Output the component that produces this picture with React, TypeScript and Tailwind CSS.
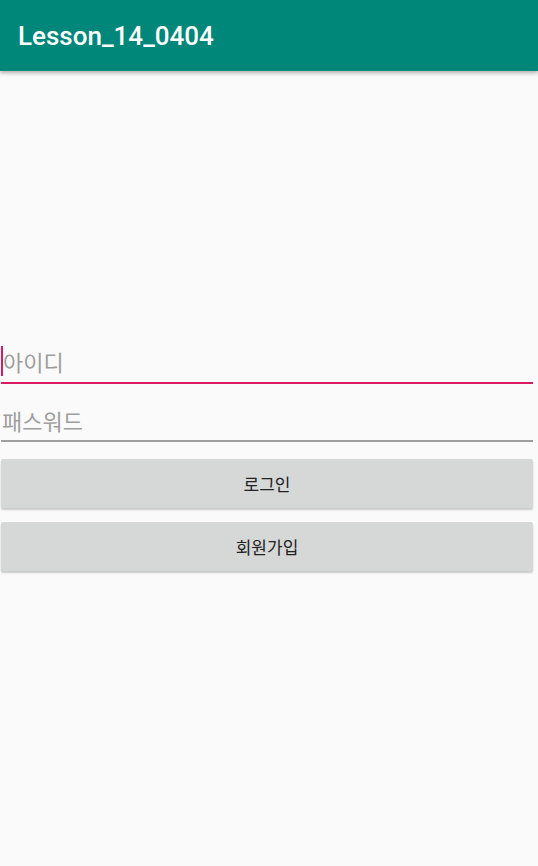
export default function App() {
  const kr = { fontFamily: '"Noto Sans CJK KR", Roboto, sans-serif' };
  return (
    <div className="w-[538px] h-[866px] bg-[#fafafa] flex flex-col overflow-hidden">
      <header className="h-[71px] bg-[#00877a] shadow-[0_2px_4px_rgba(0,0,0,0.3)] flex items-center px-[18px] relative z-10">
        <h1 className="text-white text-[26px] font-medium pt-[1px]" style={{ fontFamily: "Roboto, sans-serif" }}>
          Lesson_14_0404
        </h1>
      </header>

      <main className="flex-1 flex flex-col pt-[258px] pl-[1px] pr-[5px]">
        <div className="relative h-[55px] border-b-2 border-[#d81b60] flex items-end pb-[6px]">
          <span className="absolute left-0 top-[17px] w-[2px] h-[30px] bg-[#d81b60]" />
          <span className="text-[22px] text-[#9e9e9e] pl-[2px] leading-[30px]" style={kr}>아이디</span>
        </div>
        <div className="h-[58px] border-b-2 border-[#9e9e9e] flex items-end pb-[5px]">
          <span className="text-[22px] text-[#9e9e9e] pl-[1px] leading-[30px]" style={kr}>패스워드</span>
        </div>
        <div className="flex flex-col gap-[14px] mt-[17px]">
          <button className="h-[49px] bg-[#d6d7d7] rounded-[2px] shadow-[0_2px_2px_rgba(0,0,0,0.2)] text-[17px] text-[#222]" style={kr}>
            로그인
          </button>
          <button className="h-[49px] bg-[#d6d7d7] rounded-[2px] shadow-[0_2px_2px_rgba(0,0,0,0.2)] text-[17px] text-[#222]" style={kr}>
            회원가입
          </button>
        </div>
      </main>
    </div>
  );
}
